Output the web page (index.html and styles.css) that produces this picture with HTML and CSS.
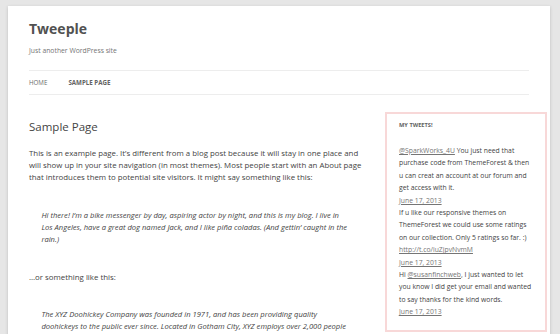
FILE: index.html
```html
<!DOCTYPE html>
<html lang="en">
<head>
    <meta charset="UTF-8">
    <meta name="viewport" content="width=device-width, initial-scale=1.0">
    <title>Sample Page | Tweeple</title>
    <link rel="stylesheet" href="styles.css">
</head>
<body>
    <div class="site">
        <header class="site-header">
            <h1 class="site-title"><a href="#">Tweeple</a></h1>
            <h2 class="site-description">Just another WordPress site</h2>
            <nav class="main-navigation">
                <ul>
                    <li><a href="#">Home</a></li>
                    <li class="current"><a href="#">Sample Page</a></li>
                </ul>
            </nav>
        </header>

        <div class="main">
            <div class="content">
                <h1 class="entry-title">Sample Page</h1>
                <div class="entry-content">
                    <p>This is an example page. It’s different from a blog post because it will stay in one place and will show up in your site navigation (in most themes). Most people start with an About page that introduces them to potential site visitors. It might say something like this:</p>
                    <blockquote>Hi there! I’m a bike messenger by day, aspiring actor by night, and this is my blog. I live in Los Angeles, have a great dog named Jack, and I like piña coladas. (And gettin’ caught in the rain.)</blockquote>
                    <p>…or something like this:</p>
                    <blockquote>The XYZ Doohickey Company was founded in 1971, and has been providing quality doohickeys to the public ever since. Located in Gotham City, XYZ employs over 2,000 people and does all kinds of awesome things for the Gotham community.</blockquote>
                </div>
            </div>

            <aside class="widget-area">
                <div class="widget tweets">
                    <h3 class="widget-title">My Tweets!</h3>
                    <ul>
                        <li><a href="#">@SparkWorks_4U</a> You just need that purchase code from ThemeForest &amp; then u can creat an account at our forum and get access with it.<br><a href="#" class="date">June 17, 2013</a></li>
                        <li>If u like our responsive themes on ThemeForest we could use some ratings on our collection. Only 5 ratings so far. :) <a href="#">http://t.co/iuZjpvNvmM</a><br><a href="#" class="date">June 17, 2013</a></li>
                        <li>Hi <a href="#">@susanfinchweb</a>, I just wanted to let you know I did get your email and wanted to say thanks for the kind words.<br><a href="#" class="date">June 17, 2013</a></li>
                    </ul>
                </div>
            </aside>
        </div>
    </div>
</body>
</html>
```

FILE: styles.css
```css
body {
    margin: 0;
    background-color: #e6e6e6;
    font-family: 'Open Sans', 'Liberation Sans', sans-serif;
    color: #444;
}
a {
    color: inherit;
}
.site {
    margin: 6px 10px 0 8px;
    padding: 0 21px;
    min-height: 328px;
    background-color: #fff;
    box-shadow: 0 1px 3px rgba(100, 100, 100, 0.3);
}
/* Cabeçalho */
.site-header {
    padding-top: 14px;
}
.site-title {
    margin: 0 0 7px;
    font-size: 14px;
    line-height: 18px;
    font-weight: bold;
}
.site-title a {
    color: #515151;
    text-decoration: none;
}
.site-description {
    margin: 0;
    font-size: 6.8px;
    line-height: 12.5px;
    font-weight: normal;
    color: #757575;
}
.main-navigation {
    margin-top: 12px;
    border-top: 1px solid #ededed;
    border-bottom: 1px solid #ededed;
}
.main-navigation ul {
    display: flex;
    margin: 0;
    padding: 0;
    list-style: none;
}
.main-navigation li {
    margin-right: 21px;
    font-size: 6.2px;
    line-height: 23px;
    text-transform: uppercase;
}
.main-navigation a {
    color: #6a6a6a;
    text-decoration: none;
}
.main-navigation .current a {
    color: #636363;
    font-weight: bold;
}
/* Conteúdo */
.main {
    display: flex;
    justify-content: space-between;
    align-items: flex-start;
}
.content {
    width: 334px;
    padding-top: 24px;
}
.entry-title {
    margin: 0 0 13px;
    font-size: 11.5px;
    line-height: 15px;
    font-weight: normal;
    color: #444;
}
.entry-content {
    font-size: 7.85px;
    line-height: 12.4px;
}
.entry-content p {
    margin: 0 0 12.4px;
}
.entry-content blockquote {
    margin: 0 0 12.4px;
    padding: 12.4px 14px 12.4px 12.4px;
    font-size: 7.6px;
    font-style: italic;
}
/* Widget de tweets */
.widget-area {
    width: 162px;
    margin-top: 17px;
    margin-right: -18px;
}
.tweets {
    padding: 5px 12px 11px;
    border: 2px solid #f8d8d8;
}
.widget-title {
    margin: 0 0 14px;
    font-size: 5.7px;
    line-height: 12.5px;
    font-weight: bold;
    text-transform: uppercase;
    color: #636363;
}
.tweets ul {
    margin: 0;
    padding: 0;
    list-style: none;
}
.tweets li {
    font-size: 6.8px;
    line-height: 12.4px;
    color: #444;
}
.tweets a {
    color: #757575;
}
```
